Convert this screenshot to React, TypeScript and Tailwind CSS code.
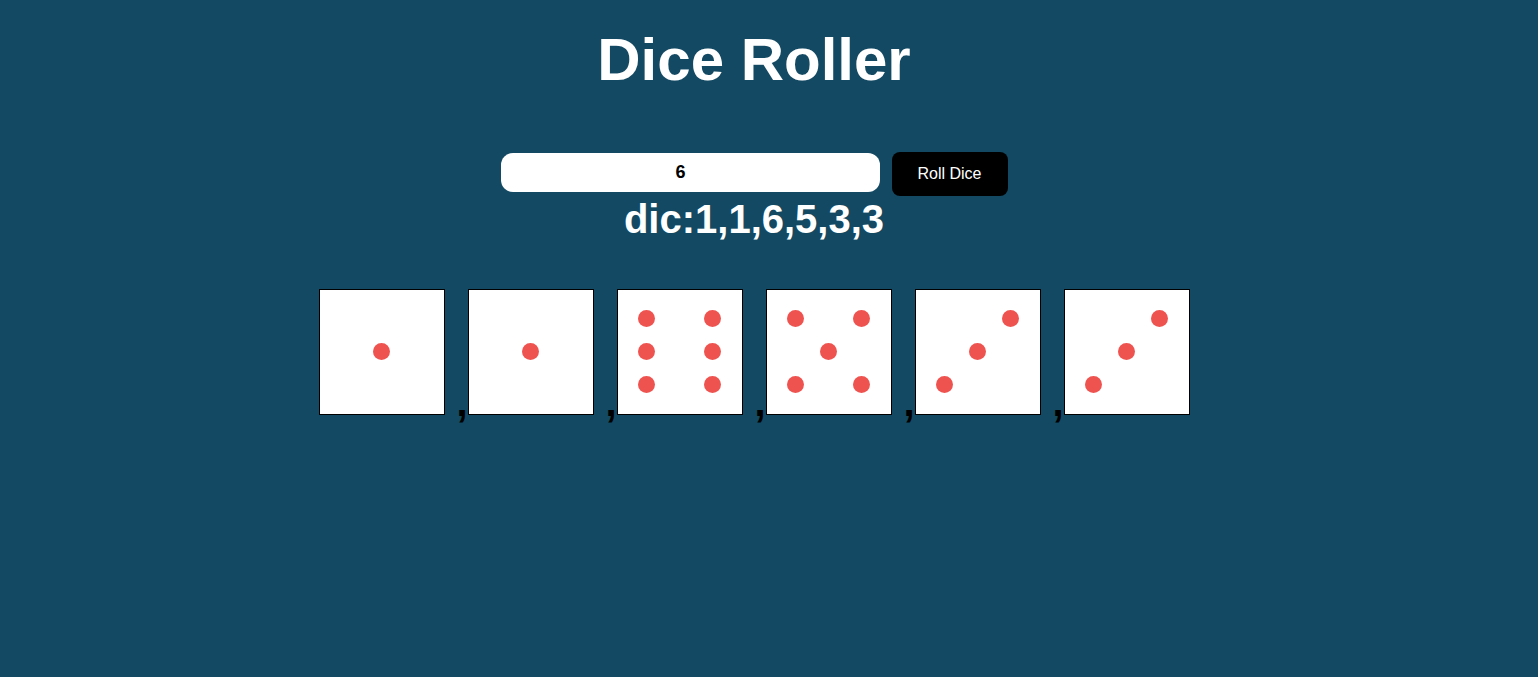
import { useState } from 'react';

const pips: Record<number, number[]> = {
  1: [4],
  3: [2, 4, 6],
  5: [0, 2, 4, 6, 8],
  6: [0, 2, 3, 5, 6, 8],
};

const Die = ({ value }: { value: number }) => {
  return (
    <div className="w-[126px] h-[126px] shrink-0 border border-black bg-white pt-[12px] pl-[12px]">
      <div className="grid grid-cols-[repeat(3,33px)] grid-rows-[repeat(3,33px)]">
        {Array.from({ length: 9 }, (_, index) => (
          <div key={index} className="flex items-center justify-center">
            {pips[value]?.includes(index) && (
              <div className="w-[17px] h-[17px] rounded-full bg-[#ef5350]" />
            )}
          </div>
        ))}
      </div>
    </div>
  );
};

const App = () => {
  const [count, setCount] = useState('6');
  const [dice] = useState([1, 1, 6, 5, 3, 3]);

  return (
    <div
      className="min-h-[677px] w-full bg-[#134962] pt-[30px] pr-[30px] flex flex-col items-center"
      style={{ fontFamily: '"Liberation Sans", Arial, sans-serif' }}
    >
      <h1 className="text-[60px] leading-none font-bold text-white">Dice Roller</h1>

      <div className="mt-[62px] flex items-start gap-[12px]">
        <input
          type="number"
          value={count}
          onChange={(e) => setCount(e.target.value)}
          className="mt-[1px] w-[379px] h-[39px] rounded-xl bg-white pr-[4px] text-center text-[18px] font-bold text-black outline-none"
        />
        <button className="h-[44px] w-[116px] rounded-lg bg-black text-white text-[16px]">
          Roll Dice
        </button>
      </div>

      <div className="mt-[3px] text-[40px] leading-none font-bold text-white">
        dic:{dice.join(',')}
      </div>

      <div className="mt-[50px] flex items-end">
        {dice.map((value, index) => (
          <div key={index} className="flex items-end">
            {index > 0 && (
              <span className="w-[23px] mb-[-7px] text-right text-[40px] leading-none font-bold text-black">
                ,
              </span>
            )}
            <Die value={value} />
          </div>
        ))}
      </div>
    </div>
  );
};

export default App;
